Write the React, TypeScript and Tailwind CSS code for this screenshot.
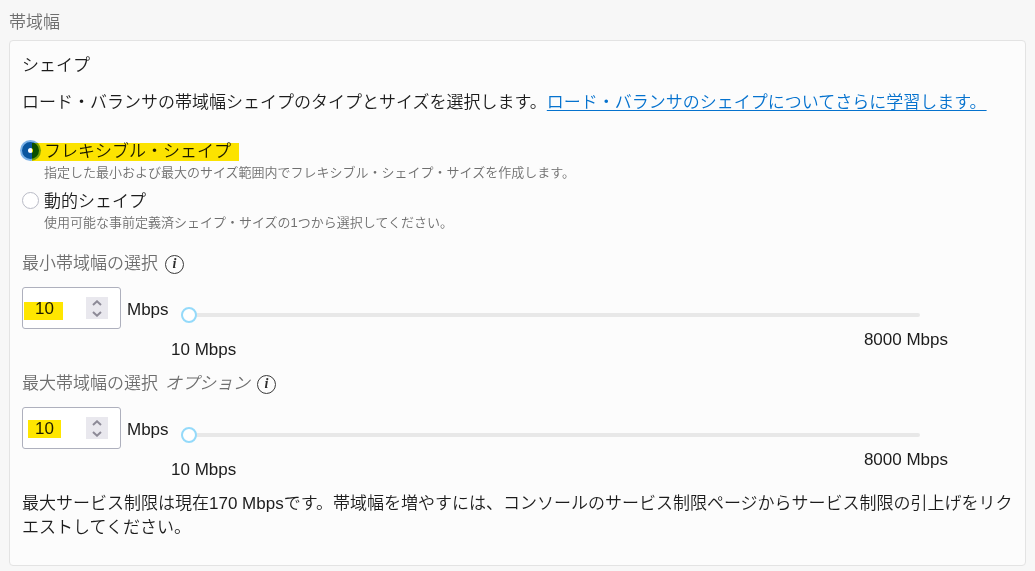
import { useState } from "react";
import type { ReactNode } from "react";

const shapes = [
  {
    id: "flexible",
    label: "フレキシブル・シェイプ",
    hint: "指定した最小および最大のサイズ範囲内でフレキシブル・シェイプ・サイズを作成します。",
  },
  {
    id: "dynamic",
    label: "動的シェイプ",
    hint: "使用可能な事前定義済シェイプ・サイズの1つから選択してください。",
  },
];

const MIN = 10;
const MAX = 8000;

function Marker({ className }: { className: string }) {
  return <span aria-hidden="true" className={`pointer-events-none absolute bg-[#ffe600] mix-blend-multiply ${className}`} />;
}

function InfoButton() {
  return (
    <button
      type="button"
      aria-label="詳細"
      className="flex size-[19px] items-center justify-center rounded-full border-[1.5px] border-[#3a3a3a] pb-px font-['Liberation_Serif',serif] text-[14px] leading-none font-bold text-[#2b2b2b] italic"
    >
      i
    </button>
  );
}

function Chevron({ up = false }: { up?: boolean }) {
  return (
    <svg width="10" height="6" viewBox="0 0 10 6" fill="none" stroke="#8d8a97" strokeWidth="2" aria-hidden="true">
      <path d={up ? "M1 5 5 1.3 9 5" : "M1 1 5 4.7 9 1"} />
    </svg>
  );
}

type BandwidthFieldProps = {
  id: string;
  label: string;
  optional?: boolean;
  marker: ReactNode;
};

function BandwidthField({ id, label, optional, marker }: BandwidthFieldProps) {
  const [value, setValue] = useState(MIN);
  const update = (n: number) => setValue(Math.min(MAX, Math.max(MIN, n)));

  return (
    <div>
      <div className="flex items-center gap-[7px] text-[#6f6f6f]">
        <label htmlFor={id}>{label}</label>
        {optional && <em>オプション</em>}
        <InfoButton />
      </div>
      <div className="mt-[11px] flex items-start">
        <div className="relative flex h-[42px] w-[99px] shrink-0 items-center rounded-[3px] border border-[#aeb0bd] bg-white pr-3">
          <input
            id={id}
            type="number"
            min={MIN}
            max={MAX}
            value={value}
            onChange={(e) => update(Number(e.target.value))}
            className="h-10 w-full min-w-0 flex-1 appearance-none bg-transparent pt-0.5 pl-3 outline-none [-moz-appearance:textfield] [&::-webkit-inner-spin-button]:appearance-none"
          />
          <div className="flex w-[22px] flex-col bg-[#e9e8ee]">
            <button type="button" aria-label="増やす" onClick={() => update(value + 1)} className="flex h-[11px] items-center justify-center">
              <Chevron up />
            </button>
            <button type="button" aria-label="減らす" onClick={() => update(value - 1)} className="flex h-[11px] items-center justify-center">
              <Chevron />
            </button>
          </div>
          {marker}
        </div>
        <span className="ml-1.5 flex h-[42px] w-[44px] shrink-0 items-center pt-1">Mbps</span>
        <div className="mr-[69px] min-w-0 flex-1 pt-5">
          <div className="flex pr-7 pl-2.5">
            <input
              type="range"
              aria-label={label}
              min={MIN}
              max={MAX}
              value={value}
              onChange={(e) => update(Number(e.target.value))}
              className="h-4 w-full appearance-none bg-transparent [&::-webkit-slider-runnable-track]:h-1 [&::-webkit-slider-runnable-track]:rounded-full [&::-webkit-slider-runnable-track]:bg-[#e8e8e8] [&::-webkit-slider-thumb]:-mt-1.5 [&::-webkit-slider-thumb]:size-4 [&::-webkit-slider-thumb]:appearance-none [&::-webkit-slider-thumb]:rounded-full [&::-webkit-slider-thumb]:border-2 [&::-webkit-slider-thumb]:border-[#94dafa] [&::-webkit-slider-thumb]:bg-white"
            />
          </div>
          <div className="flex items-start justify-between pt-[5px]">
            <span className="pt-2.5">{MIN} Mbps</span>
            <span>{MAX} Mbps</span>
          </div>
        </div>
      </div>
    </div>
  );
}

export default function App() {
  const [shape, setShape] = useState("flexible");

  return (
    <main
      lang="ja"
      className="min-h-screen bg-[#f7f7f7] px-[9px] pt-[11px] pb-[5px] font-['Liberation_Sans','Noto_Sans_CJK_JP',sans-serif] text-[17px] leading-6 font-[350] text-[#1c1c1c]"
    >
      <h2 className="font-[350] text-[#6f6f6f]">帯域幅</h2>
      <section className="mt-[5px] rounded-[4px] border border-[#e3e3e3] bg-[#fcfcfc] pt-[13px] pr-2 pb-[25px] pl-3">
        <h3 id="shape-heading" className="font-[350]">
          シェイプ
        </h3>
        <p className="mt-[13px]">
          ロード・バランサの帯域幅シェイプのタイプとサイズを選択します。
          <a href="#shapes" className="text-[#0572ce] underline decoration-1 underline-offset-2">
            ロード・バランサのシェイプについてさらに学習します。
          </a>
        </p>

        <div role="radiogroup" aria-labelledby="shape-heading" className="mt-[21px] flex flex-col gap-1">
          {shapes.map((s) => (
            <div key={s.id} className="relative grid grid-cols-[22px_1fr] items-center">
              <input
                id={s.id}
                type="radio"
                name="shape"
                checked={shape === s.id}
                onChange={() => setShape(s.id)}
                aria-describedby={`${s.id}-hint`}
                className="size-[17px] appearance-none rounded-full border border-[#b9bbc6] bg-white checked:border-[6px] checked:border-[#0a56a0] checked:ring-2 checked:ring-[#79b0e6]"
              />
              <label htmlFor={s.id} className="pt-1">
                {s.label}
              </label>
              <p id={`${s.id}-hint`} className="col-start-2 text-[13px] leading-[18px] text-[#6f6f6f]">
                {s.hint}
              </p>
              {s.id === "flexible" && <Marker className="top-[7px] left-2.5 h-[18px] w-[207px]" />}
            </div>
          ))}
        </div>

        <div className="mt-5 flex flex-col gap-2.5">
          <BandwidthField id="min-bandwidth" label="最小帯域幅の選択" marker={<Marker className="top-3.5 left-px h-[18px] w-[39px]" />} />
          <BandwidthField
            id="max-bandwidth"
            label="最大帯域幅の選択"
            optional
            marker={<Marker className="top-3 left-[5px] h-[18px] w-[33px]" />}
          />
        </div>

        <p className="mt-2.5">
          最大サービス制限は現在170 Mbpsです。帯域幅を増やすには、コンソールのサービス制限ページからサービス制限の引上げをリクエストしてください。
        </p>
      </section>
    </main>
  );
}
